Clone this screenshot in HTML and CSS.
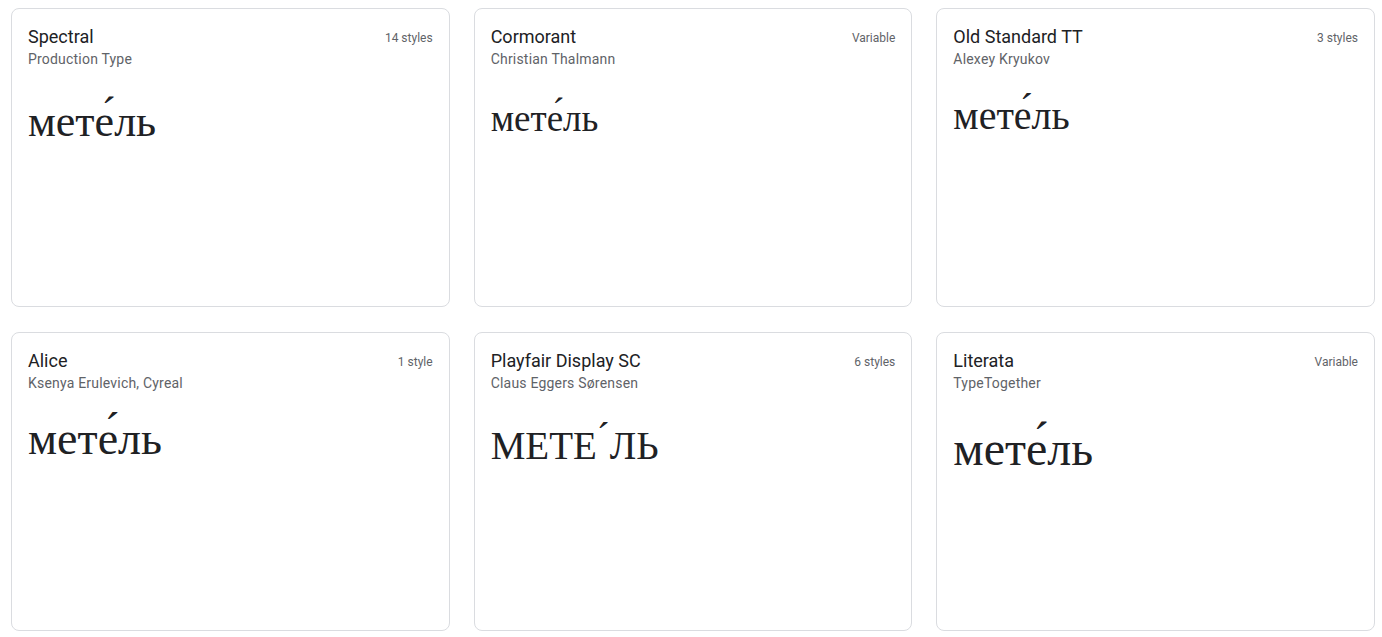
FILE: index.html
```html
<!DOCTYPE html>
<html lang="ru">
<head>
<meta charset="utf-8">
<title>Fonts</title>
<link rel="stylesheet" href="styles.css">
</head>
<body>
<main class="grid">
  <article class="card">
    <header class="card-head">
      <div class="names">
        <div class="family">Spectral</div>
        <div class="designer">Production Type</div>
      </div>
      <div class="styles">14 styles</div>
    </header>
    <div class="sample sample-spectral">мете́ль</div>
  </article>
  <article class="card">
    <header class="card-head">
      <div class="names">
        <div class="family">Cormorant</div>
        <div class="designer">Christian Thalmann</div>
      </div>
      <div class="styles">Variable</div>
    </header>
    <div class="sample sample-cormorant">мете́ль</div>
  </article>
  <article class="card">
    <header class="card-head">
      <div class="names">
        <div class="family">Old Standard TT</div>
        <div class="designer">Alexey Kryukov</div>
      </div>
      <div class="styles">3 styles</div>
    </header>
    <div class="sample sample-oldstandard">мете́ль</div>
  </article>
  <article class="card">
    <header class="card-head">
      <div class="names">
        <div class="family">Alice</div>
        <div class="designer">Ksenya Erulevich, Cyreal</div>
      </div>
      <div class="styles">1 style</div>
    </header>
    <div class="sample sample-alice">мете́ль</div>
  </article>
  <article class="card">
    <header class="card-head">
      <div class="names">
        <div class="family">Playfair Display SC</div>
        <div class="designer">Claus Eggers Sørensen</div>
      </div>
      <div class="styles">6 styles</div>
    </header>
    <div class="sample sample-playfair">МЕТЕ<span class="accent">´</span>ЛЬ</div>
  </article>
  <article class="card">
    <header class="card-head">
      <div class="names">
        <div class="family">Literata</div>
        <div class="designer">TypeTogether</div>
      </div>
      <div class="styles">Variable</div>
    </header>
    <div class="sample sample-literata">мете́ль</div>
  </article>
</main>
</body>
</html>
```

FILE: styles.css
```css
* { box-sizing: border-box; }
html, body { margin: 0; padding: 0; background: #ffffff; }
body { font-family: Roboto, "Noto Sans", "Liberation Sans", sans-serif; color: #202124; }

.grid {
  display: grid;
  grid-template-columns: repeat(3, 438.67px);
  grid-auto-rows: 299px;
  column-gap: 24px;
  row-gap: 25px;
  padding: 8px 0 0 11px;
}

.card {
  border: 1px solid #dadce0;
  border-radius: 8px;
  padding: 16px;
  overflow: hidden;
}

.card-head {
  display: flex;
  justify-content: space-between;
  align-items: flex-start;
}

.family {
  font-size: 18px;
  line-height: 24px;
  color: #202124;
}

.designer {
  font-size: 14px;
  line-height: 20px;
  letter-spacing: 0.2px;
  color: #5f6368;
}

.styles {
  font-size: 12px;
  line-height: 16px;
  padding-top: 5px;
  color: #5f6368;
}

.sample {
  font-family: "Liberation Serif", "DejaVu Serif", serif;
  color: #202124;
  line-height: 1;
  white-space: nowrap;
}

.sample-spectral { font-size: 44px; margin-top: 31px; }
.sample-cormorant { font-size: 37px; margin-top: 31px; }
.sample-oldstandard { font-size: 40px; margin-top: 27px; }
.sample-alice { font-size: 46px; margin-top: 23px; }
.sample-playfair { font-size: 39px; margin-top: 33px; }
.sample-playfair .accent { display: inline-block; transform: translateY(-9px); }
.sample-literata { font-size: 48px; margin-top: 32px; }
```
